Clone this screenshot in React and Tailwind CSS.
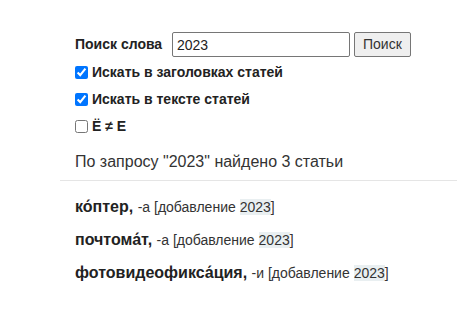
import React, { useState } from 'react'

const results = [
  { word: 'ко́птер', ending: '-а' },
  { word: 'почтома́т', ending: '-а' },
  { word: 'фотовидеофикса́ция', ending: '-и' },
]

export default function App() {
  const [query, setQuery] = useState('2023')
  const [inTitles, setInTitles] = useState(true)
  const [inText, setInText]     = useState(true)
  const [yo, setYo]             = useState(false)

  return (
    <div className="min-h-[333px] bg-white text-[#222] font-['Liberation_Sans',Arial,sans-serif] pt-[32px] pl-[60px]">
      <div className="pl-[15px]">
        <div className="flex items-center h-[25px]">
          <span className="text-[14px] font-bold w-[97px]">Поиск слова</span>
          <input
            className="w-[178px] h-[25px] border border-[#767676] rounded-[2px] px-[4px] text-[14px] text-[#222] outline-none"
            value={query}
            onChange={e => setQuery(e.target.value)}
          />
          <button className="ml-[4px] h-[25px] px-[8px] text-[14px] text-[#333] bg-[#efefef] border border-[#767676] rounded-[2px]">
            Поиск
          </button>
        </div>

        <label className="flex items-center mt-[7px] h-[16px] text-[14px] font-bold">
          <input type="checkbox" className="w-[13px] h-[13px] m-0 mr-[4px] accent-[#0075ff]" checked={inTitles} onChange={e => setInTitles(e.target.checked)} />
          Искать в заголовках статей
        </label>
        <label className="flex items-center mt-[11px] h-[16px] text-[14px] font-bold">
          <input type="checkbox" className="w-[13px] h-[13px] m-0 mr-[4px] accent-[#0075ff]" checked={inText} onChange={e => setInText(e.target.checked)} />
          Искать в тексте статей
        </label>
        <label className="flex items-center mt-[11px] h-[16px] text-[14px] font-bold">
          <input type="checkbox" className="w-[13px] h-[13px] m-0 mr-[4px]" checked={yo} onChange={e => setYo(e.target.checked)} />
          Ё ≠ Е
        </label>

        <p className="mt-[16px] text-[16px] text-[#333]">
          По запросу "2023" найдено 3 статьи
        </p>
      </div>

      <div className="mt-[6px] border-t border-[#e5e5e5]" />

      <div className="pl-[15px] pt-[16px] flex flex-col gap-[13px]">
        {results.map(r => (
          <div key={r.word} className="text-[16px] leading-[20px]">
            <b>{r.word},</b>{' '}
            <span className="text-[14px] text-[#333]">
              {r.ending} [добавление <span className="bg-[#e9eff1]">2023</span>]
            </span>
          </div>
        ))}
      </div>
    </div>
  )
}
